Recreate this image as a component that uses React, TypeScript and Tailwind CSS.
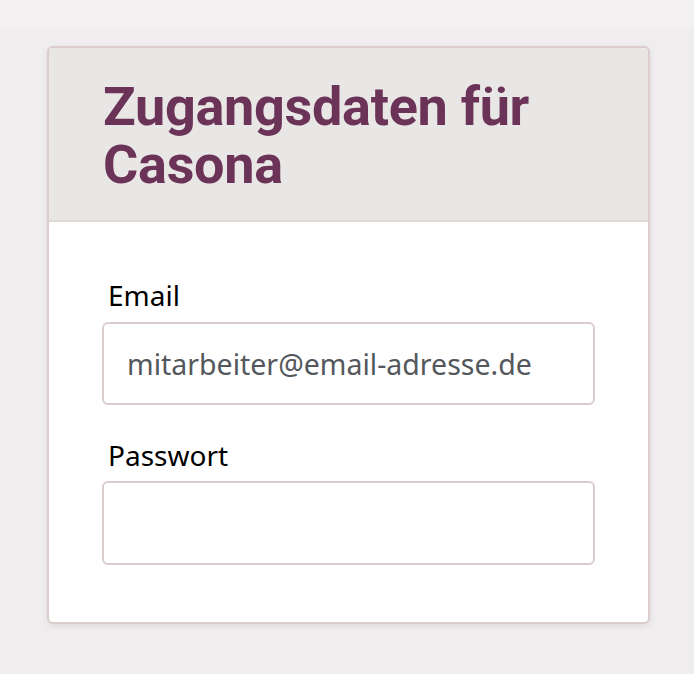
export default function App() {
  return (
    <main className="min-h-[674px] w-full bg-[#efedee]">
      <div className="h-[28px] bg-[#f2f0f1]" />
      <section className="ml-[47px] mt-[18px] w-[603px] overflow-hidden rounded-[6px] border-2 border-[#dccccc] bg-white shadow-[0_2px_6px_rgba(0,0,0,0.08)]">
        <header className="border-b-2 border-[#dfdad8] bg-[#e9e7e5] px-[54px] pb-[26px] pt-[30px]">
          <h1 className="font-['Roboto',sans-serif] text-[54px] font-bold leading-[58px] tracking-[-0.3px] text-[#6b3358]">
            Zugangsdaten für Casona
          </h1>
        </header>
        <form className="flex flex-col px-[53px] pb-[57px] pt-[56px] font-['Noto_Sans',sans-serif]">
          <label htmlFor="email" className="mb-[10px] pl-[6px] text-[28px] leading-[34px] text-black">
            Email
          </label>
          <input
            id="email"
            type="email"
            defaultValue="mitarbeiter@email-adresse.de"
            className="h-[83px] w-full rounded-[6px] border-2 border-[#dccccc] px-[23px] text-[28.5px] text-[#54585d] outline-none"
          />
          <label htmlFor="password" className="mb-[9px] mt-[33px] pl-[6px] text-[28px] leading-[34px] text-black">
            Passwort
          </label>
          <input
            id="password"
            type="password"
            className="h-[84px] w-full rounded-[6px] border-2 border-[#dccccc] px-[23px] text-[28.5px] text-[#54585d] outline-none"
          />
        </form>
      </section>
    </main>
  );
}
